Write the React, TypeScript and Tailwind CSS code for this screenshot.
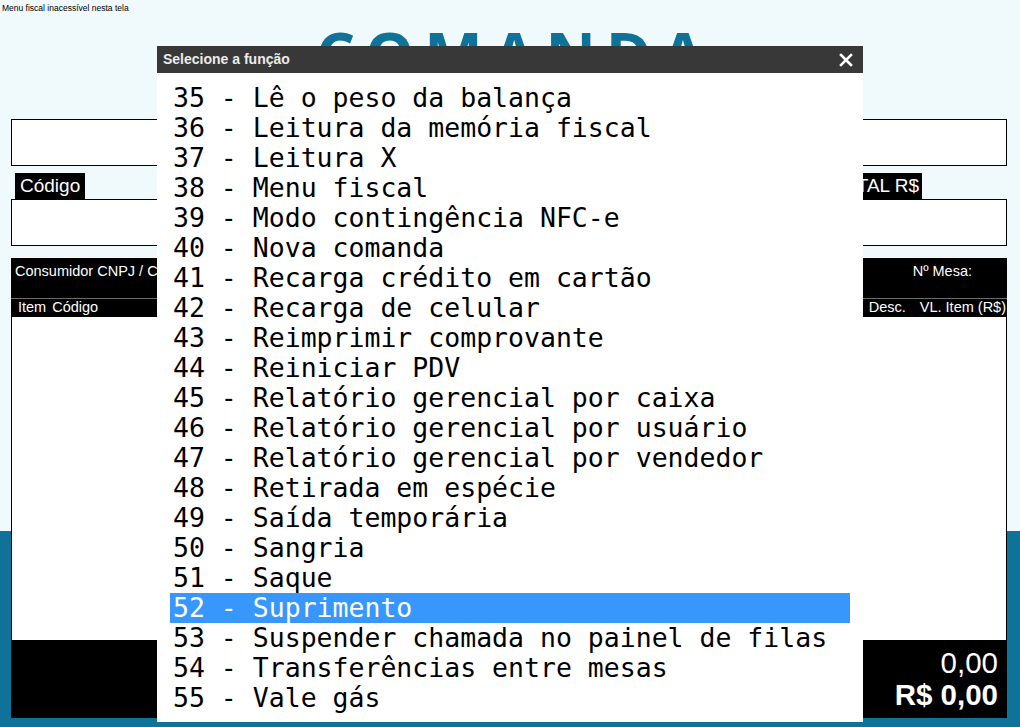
import React from "react";

const items = [
  "35 - Lê o peso da balança",
  "36 - Leitura da memória fiscal",
  "37 - Leitura X",
  "38 - Menu fiscal",
  "39 - Modo contingência NFC-e",
  "40 - Nova comanda",
  "41 - Recarga crédito em cartão",
  "42 - Recarga de celular",
  "43 - Reimprimir comprovante",
  "44 - Reiniciar PDV",
  "45 - Relatório gerencial por caixa",
  "46 - Relatório gerencial por usuário",
  "47 - Relatório gerencial por vendedor",
  "48 - Retirada em espécie",
  "49 - Saída temporária",
  "50 - Sangria",
  "51 - Saque",
  "52 - Suprimento",
  "53 - Suspender chamada no painel de filas",
  "54 - Transferências entre mesas",
  "55 - Vale gás",
];

export default function App() {
  const arial = { fontFamily: '"Liberation Sans", Arial, sans-serif' };
  return (
    <div
      className="relative w-[1020px] h-[727px] overflow-hidden bg-[linear-gradient(to_bottom,#f0f9fb_531px,#0e7299_531px)]"
      style={arial}
    >
      <div className="flex flex-col">
        <div className="h-[16px] pl-[2px] pt-[3px] text-[8.5px] leading-[10px] text-black">
          Menu fiscal inacessível nesta tela
        </div>
        <div className="h-[103px] flex justify-center">
          <div
            className="text-[62px] leading-[76px] font-bold tracking-[0.16em] pl-[0.16em] text-[#0e7299]"
            style={{ fontFamily: '"Open Sans", sans-serif' }}
          >
            COMANDA
          </div>
        </div>
        <div className="ml-[11px] w-[996px] h-[47px] border border-black bg-white" />
        <div className="mt-[7px] ml-[15px] mr-[98px] flex justify-between">
          <div className="h-[26px] px-[5px] bg-black text-white text-[19px] leading-[26px]">Código</div>
          <div className="h-[26px] px-[3px] bg-black text-white text-[19px] leading-[26px]">VL. TOTAL R$</div>
        </div>
        <div className="ml-[11px] w-[996px] h-[47px] border border-black bg-white" />
        <div className="mt-[12px] ml-[11px] w-[996px] bg-black text-white text-[14.5px]">
          <div className="h-[41px] flex justify-between items-start pt-[3px] border-b border-[#6b6b6b]">
            <span className="pl-[4px]">Consumidor CNPJ / CPF:</span>
            <span className="pr-[35px]">Nº Mesa:</span>
          </div>
          <div className="h-[18px] flex justify-between items-center">
            <div className="flex gap-[6px] pl-[7px]">
              <span>Item</span>
              <span>Código</span>
            </div>
            <div className="flex gap-[14px] pr-[1px]">
              <span>Desc.</span>
              <span>VL. Item (R$)</span>
            </div>
          </div>
        </div>
        <div className="ml-[11px] w-[996px] h-[323px] bg-white border-x border-black" />
        <div className="ml-[11px] w-[996px] h-[78px] bg-black text-white flex flex-col items-end pr-[9px] pt-[7px]">
          <div className="text-[29.5px] leading-[32px]">0,00</div>
          <div className="text-[29.5px] leading-[32px] font-bold">R$ 0,00</div>
        </div>
      </div>

      <div className="absolute left-[157px] top-[46px] w-[706px] h-[676px] bg-white flex flex-col">
        <div className="h-[27px] bg-[#383838] flex items-center justify-between pl-[6px] pr-[10px]">
          <span className="text-[14px] font-bold text-[#ececec]">Selecione a função</span>
          <svg width="14" height="14" viewBox="0 0 14 14">
            <path d="M2 2 L12 12 M12 2 L2 12" stroke="#ffffff" strokeWidth="2.6" strokeLinecap="square" />
          </svg>
        </div>
        <div className="pt-[10px] px-[13px] flex flex-col">
          {items.map((t) => {
            const sel = t.startsWith("52");
            return (
              <div
                key={t}
                className={
                  "h-[30px] pl-[3px] text-[26.5px] leading-[30px] whitespace-pre " +
                  (sel ? "bg-[#3897fd] text-white" : "text-black")
                }
                style={{ fontFamily: '"DejaVu Sans Mono", monospace' }}
              >
                {t}
              </div>
            );
          })}
        </div>
      </div>
    </div>
  );
}
